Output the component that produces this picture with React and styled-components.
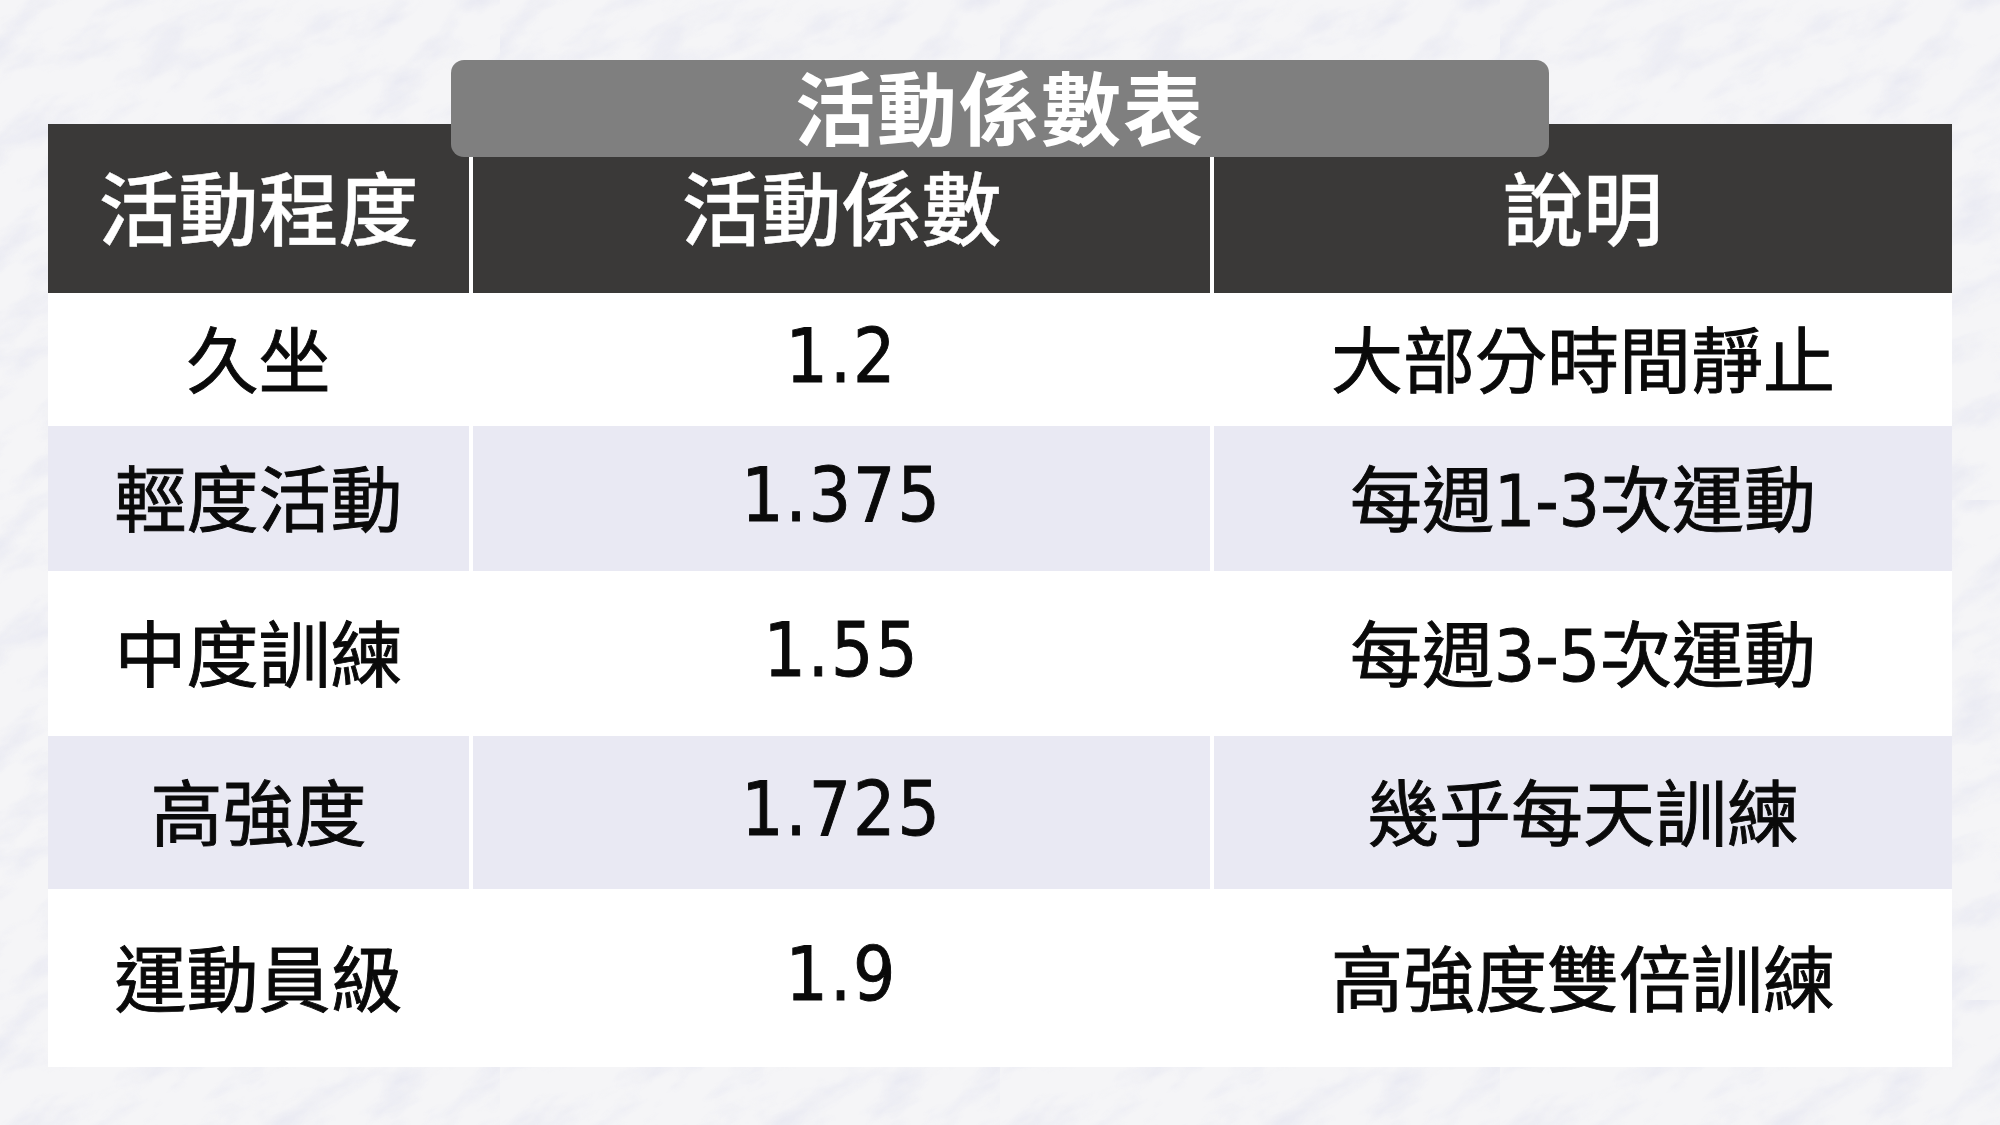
import React from "react";
import styled, { createGlobalStyle } from "styled-components";

const noise = encodeURIComponent(
  `<svg xmlns="http://www.w3.org/2000/svg" width="500" height="500"><filter id="n" x="0" y="0" width="100%" height="100%"><feTurbulence type="fractalNoise" baseFrequency="0.014 0.03" numOctaves="4" seed="11"/><feColorMatrix values="0 0 0 0 0.74 0 0 0 0 0.75 0 0 0 0 0.86 1.3 0 0 0 -0.6"/></filter><g transform="rotate(-25 250 250)"><rect x="-250" y="-250" width="1000" height="1000" filter="url(#n)"/></g></svg>`
);

const GlobalStyle = createGlobalStyle`
  html, body {
    margin: 0;
    padding: 0;
  }
  body {
    width: 2000px;
    height: 1125px;
    overflow: hidden;
    background-color: #f5f5f7;
    background-image: url("data:image/svg+xml,${noise}");
    font-family: "Noto Sans CJK TC", "Noto Sans", sans-serif;
  }
`;

const rows = [
  { level: "久坐", factor: "1.2", note: "大部分時間靜止", height: 133 },
  { level: "輕度活動", factor: "1.375", note: "每週1-3次運動", height: 145, shaded: true },
  { level: "中度訓練", factor: "1.55", note: "每週3-5次運動", height: 165 },
  { level: "高強度", factor: "1.725", note: "幾乎每天訓練", height: 153, shaded: true },
  { level: "運動員級", factor: "1.9", note: "高強度雙倍訓練", height: 178 },
];

function App() {
  return (
    <>
      <GlobalStyle />
      <Page>
        <TitleTab>活動係數表</TitleTab>
        <Table>
          <Row $height={169}>
            <HeadCell>活動程度</HeadCell>
            <HeadCell>活動係數</HeadCell>
            <HeadCell>說明</HeadCell>
          </Row>
          {rows.map((r) => (
            <Row key={r.level} $height={r.height}>
              <Cell $shaded={r.shaded}>{r.level}</Cell>
              <Cell $shaded={r.shaded} $spaced>
                {r.factor}
              </Cell>
              <Cell $shaded={r.shaded}>{r.note}</Cell>
            </Row>
          ))}
        </Table>
      </Page>
    </>
  );
}

const Page = styled.div`
  display: flex;
  flex-direction: column;
  align-items: center;
  padding: 60px 48px 0;
  height: 1125px;
  box-sizing: border-box;
`;

const TitleTab = styled.div`
  position: relative;
  z-index: 1;
  width: 1098px;
  height: 97px;
  margin-bottom: -33px;
  border-radius: 13px;
  background: #7f7f7f;
  color: #fff;
  font-size: 80px;
  font-weight: 700;
  line-height: 88px;
  text-align: center;
  letter-spacing: 2px;
`;

const Table = styled.div`
  width: 100%;
  background: #fff;
  display: flex;
  flex-direction: column;
`;

const Row = styled.div`
  display: grid;
  grid-template-columns: 421px 737px 1fr;
  column-gap: 4px;
  height: ${(p) => p.$height}px;
`;

const HeadCell = styled.div`
  display: flex;
  align-items: center;
  justify-content: center;
  padding-bottom: 10px;
  background: #3a3938;
  color: #fff;
  font-size: 80px;
  font-weight: 500;
  -webkit-text-stroke: 0.4px #fff;
`;

const Cell = styled.div`
  display: flex;
  align-items: center;
  justify-content: center;
  padding-bottom: 8px;
  background: ${(p) => (p.$shaded ? "#e9e9f3" : "#fff")};
  color: #0a0a0a;
  font-family: "DejaVu Sans Condensed", "DejaVu Sans", "Noto Sans CJK TC", sans-serif;
  font-stretch: condensed;
  font-size: ${(p) => (p.$spaced ? 74 : 72)}px;
  letter-spacing: ${(p) => (p.$spaced ? 2 : 0)}px;
  font-weight: 400;
  -webkit-text-stroke: 0.9px #0a0a0a;
`;

export default App;
